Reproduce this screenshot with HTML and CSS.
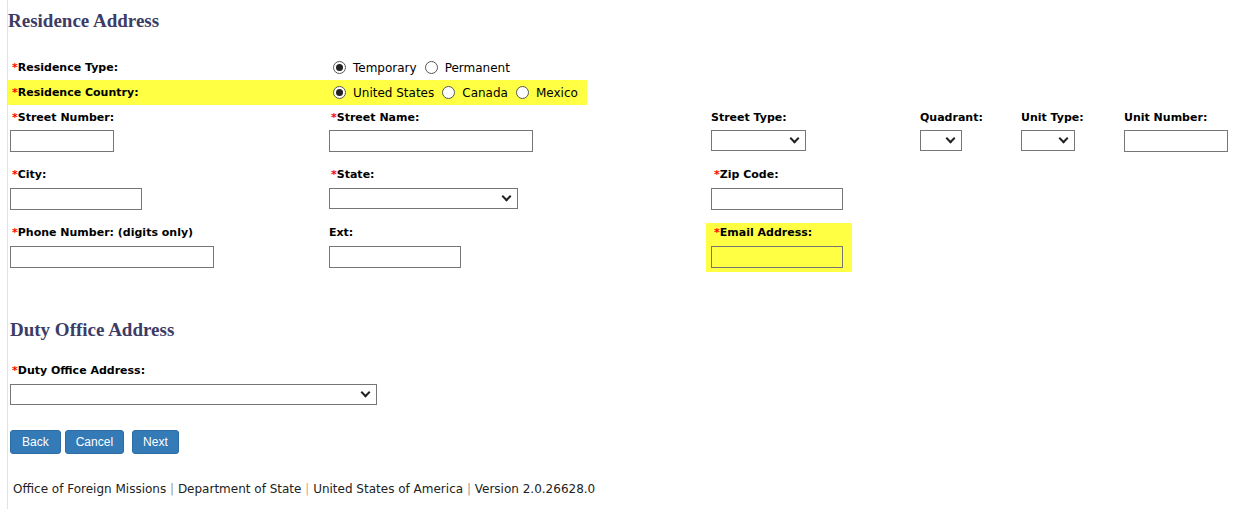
FILE: index.html
```html
<!DOCTYPE html>
<html lang="en">
<head>
    <meta charset="UTF-8">
    <title>Residence Address</title>
    <link rel="stylesheet" href="styles.css">
</head>
<body>
    <div class="page">
        <h2 class="section-title">Residence Address</h2>

        <div class="radio-row">
            <label class="field-label"><span class="req">*</span>Residence Type:</label>
            <div class="radio-group">
                <label class="radio"><input type="radio" name="restype" checked> Temporary</label>
                <label class="radio"><input type="radio" name="restype"> Permanent</label>
            </div>
        </div>
        <div class="radio-row highlight">
            <label class="field-label"><span class="req">*</span>Residence Country:</label>
            <div class="radio-group">
                <label class="radio"><input type="radio" name="country" checked> United States</label>
                <label class="radio"><input type="radio" name="country"> Canada</label>
                <label class="radio"><input type="radio" name="country"> Mexico</label>
            </div>
        </div>

        <div class="field-grid">
            <div class="field first-row">
                <label class="field-label"><span class="req">*</span>Street Number:</label>
                <input type="text" class="w-104">
            </div>
            <div class="field first-row">
                <label class="field-label"><span class="req">*</span>Street Name:</label>
                <input type="text" class="w-204">
            </div>
            <div class="field first-row">
                <label class="field-label flush">Street Type:</label>
                <span class="select-wrap"><select class="w-95"><option></option></select></span>
            </div>
            <div class="field first-row">
                <label class="field-label flush">Quadrant:</label>
                <span class="select-wrap low"><select class="w-42"><option></option></select></span>
            </div>
            <div class="field first-row">
                <label class="field-label flush">Unit Type:</label>
                <span class="select-wrap low"><select class="w-54"><option></option></select></span>
            </div>
            <div class="field first-row">
                <label class="field-label flush">Unit Number:</label>
                <input type="text" class="w-104">
            </div>

            <div class="field">
                <label class="field-label"><span class="req">*</span>City:</label>
                <input type="text" class="w-132">
            </div>
            <div class="field">
                <label class="field-label"><span class="req">*</span>State:</label>
                <span class="select-wrap"><select class="w-189"><option></option></select></span>
            </div>
            <div class="field span-rest">
                <label class="field-label indent"><span class="req">*</span>Zip Code:</label>
                <input type="text" class="w-132">
            </div>

            <div class="field">
                <label class="field-label"><span class="req">*</span>Phone Number: (digits only)</label>
                <input type="text" class="w-204">
            </div>
            <div class="field">
                <label class="field-label flush">Ext:</label>
                <input type="text" class="w-132">
            </div>
            <div class="field span-rest">
                <div class="highlight-box">
                    <label class="field-label flush"><span class="req">*</span>Email Address:</label>
                    <input type="text" class="w-132 yellow">
                </div>
            </div>
        </div>

        <h2 class="section-title second">Duty Office Address</h2>
        <div class="field single">
            <label class="field-label"><span class="req">*</span>Duty Office Address:</label>
            <span class="select-wrap"><select class="w-367"><option></option></select></span>
        </div>

        <div class="buttons">
            <button class="btn back">Back</button>
            <button class="btn">Cancel</button>
            <button class="btn next">Next</button>
        </div>

        <div class="footer">
            Office of Foreign Missions <span class="sep">|</span> Department of State <span class="sep orange">|</span> United States of America <span class="sep">|</span> Version 2.0.26628.0
        </div>
    </div>
</body>
</html>
```

FILE: styles.css
```css
body {
    margin: 0;
    background-color: white;
    color: black;
    font-family: "DejaVu Sans", Verdana, sans-serif;
    font-size: 11px;
}
.page {
    margin-left: 7px;
    border-left: 1px solid #e3e3e3;
    min-height: 509px;
}
.section-title {
    margin: 0 0 23px 0;
    padding-top: 10px;
    font-family: "Liberation Serif", "Times New Roman", serif;
    font-size: 19px;
    line-height: 22px;
    font-weight: bold;
    color: #3c3c66;
}
.section-title.second {
    margin: 0 0 23px 2px;
    padding-top: 47px;
}
.req {
    color: red;
}
.field-label {
    display: block;
    font-weight: bold;
    line-height: 14px;
    padding-left: 2px;
    white-space: nowrap;
}
.field-label.flush {
    padding-left: 0;
}
.field-label.indent {
    padding-left: 3px;
}
.radio-row {
    display: grid;
    grid-template-columns: 321px auto;
    align-items: center;
    height: 25px;
    padding-left: 2px;
    width: fit-content;
    padding-right: 9px;
}
.radio-row.highlight {
    background-color: #ffff44;
}
.radio-group {
    display: flex;
    align-items: center;
    padding-left: 2px;
    font-size: 12px;
}
.radio {
    display: flex;
    align-items: center;
    margin-right: 8px;
}
.radio:last-child {
    margin-right: 0;
}
.radio input {
    appearance: none;
    width: 13px;
    height: 13px;
    margin: 0 7px 0 0;
    border: 1px solid #555;
    border-radius: 50%;
    background-color: white;
    position: relative;
}
.radio input:checked::after {
    content: "";
    position: absolute;
    left: 2px;
    top: 2px;
    width: 7px;
    height: 7px;
    border-radius: 50%;
    background-color: #222;
}
.field-grid {
    display: grid;
    grid-template-columns: 319px 382px 209px 101px 103px auto;
    row-gap: 16px;
    padding: 6px 0 0 2px;
}
.field .field-label {
    margin-bottom: 6px;
}
.field.first-row .field-label {
    margin-bottom: 5px;
}
.span-rest {
    grid-column: 3 / 7;
}
.single {
    padding-left: 2px;
}
input[type="text"] {
    box-sizing: border-box;
    height: 22px;
    margin: 0;
    border: 1px solid #767676;
    background-color: white;
    font-size: 12px;
    display: block;
}
input.yellow {
    background-color: #ffff44;
}
.highlight-box {
    background-color: #ffff44;
    width: fit-content;
    margin: -3px 0 0 -5px;
    padding: 3px 9px 4px 5px;
}
.highlight-box .field-label {
    padding-left: 3px;
}
.select-wrap {
    display: block;
    position: relative;
    width: fit-content;
}
.select-wrap.low {
    margin-top: 5px;
}
.select-wrap select {
    appearance: none;
    box-sizing: border-box;
    height: 21px;
    margin: 0;
    border: 1px solid #767676;
    border-radius: 0;
    background-color: white;
    display: block;
}
.select-wrap::after {
    content: "";
    position: absolute;
    right: 8px;
    top: 5px;
    width: 5px;
    height: 5px;
    border-right: 2px solid #222;
    border-bottom: 2px solid #222;
    transform: rotate(45deg);
    pointer-events: none;
}
.w-42 { width: 42px; }
.w-54 { width: 54px; }
.w-95 { width: 95px; }
.w-104 { width: 104px; }
.w-132 { width: 132px; }
.w-189 { width: 189px; }
.w-204 { width: 204px; }
.w-367 { width: 367px; }
.buttons {
    display: flex;
    gap: 4px;
    padding: 25px 0 0 2px;
}
.btn {
    height: 24px;
    padding: 0 10px;
    font-family: "Liberation Sans", Arial, sans-serif;
    font-size: 12px;
    color: white;
    background-color: #337ab7;
    border: 1px solid #2e6da4;
    border-radius: 3px;
    cursor: pointer;
}
.btn.back {
    padding: 0 11px;
}
.btn.next {
    margin-left: 4px;
}
.footer {
    padding: 28px 0 0 5px;
    font-size: 12px;
    line-height: 14px;
    color: #222;
}
.sep {
    color: #999;
}
.sep.orange {
    color: #e8a27c;
}
```
